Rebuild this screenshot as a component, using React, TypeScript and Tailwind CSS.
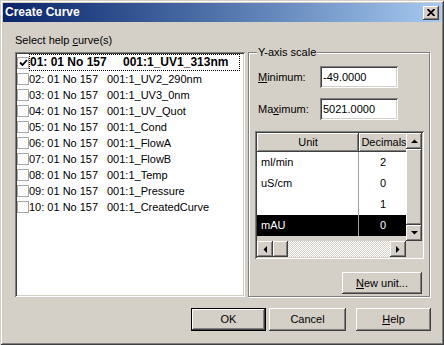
const raised =
  'shadow-[inset_-1px_-1px_0_#404040,inset_1px_1px_0_#ffffff,inset_-2px_-2px_0_#808080,inset_2px_2px_0_#d4d0c8]';
const sunken =
  'shadow-[inset_1px_1px_0_#808080,inset_-1px_-1px_0_#ffffff,inset_2px_2px_0_#404040,inset_-2px_-2px_0_#d4d0c8]';

const curves = [
  ['01: 01 No 157', '001:1_UV1_313nm'],
  ['02: 01 No 157', '001:1_UV2_290nm'],
  ['03: 01 No 157', '001:1_UV3_0nm'],
  ['04: 01 No 157', '001:1_UV_Quot'],
  ['05: 01 No 157', '001:1_Cond'],
  ['06: 01 No 157', '001:1_FlowA'],
  ['07: 01 No 157', '001:1_FlowB'],
  ['08: 01 No 157', '001:1_Temp'],
  ['09: 01 No 157', '001:1_Pressure'],
  ['10: 01 No 157', '001:1_CreatedCurve'],
];

const units = [
  ['ml/min', '2'],
  ['uS/cm', '0'],
  ['', '1'],
  ['mAU', '0'],
];

function Arrow({ dir }: { dir: 'up' | 'down' | 'left' | 'right' }) {
  const pts = {
    up: '0,4 7,4 3.5,0.5',
    down: '0,0 7,0 3.5,3.5',
    left: '4,0 4,7 0.5,3.5',
    right: '0,0 0,7 3.5,3.5',
  }[dir];
  const vert = dir === 'up' || dir === 'down';
  return (
    <div className={`flex h-[16px] w-[16px] shrink-0 items-center justify-center bg-[#d4d0c8] ${raised}`}>
      <svg width={vert ? 7 : 4} height={vert ? 4 : 7} viewBox={vert ? '0 0 7 4' : '0 0 4 7'}>
        <polygon points={pts} fill="#000" />
      </svg>
    </div>
  );
}

function CheckBox({ checked }: { checked?: boolean }) {
  return (
    <div className="flex h-[12px] w-[12px] shrink-0 items-center justify-center border border-[#a8a8a8] bg-white">
      {checked && (
        <svg width="9" height="8" viewBox="0 0 9 8">
          <path d="M1 3.5 L3.5 6 L8 1" stroke="#000" strokeWidth="1.8" fill="none" />
        </svg>
      )}
    </div>
  );
}

export default function App() {
  return (
    <div
      className={`flex h-[345px] w-[444px] flex-col bg-[#d4d0c8] p-[3px] font-['Liberation_Sans',Arial,sans-serif] text-[11px] leading-[13px] text-black shadow-[inset_1px_1px_0_#d4d0c8,inset_-1px_-1px_0_#404040,inset_2px_2px_0_#ffffff,inset_-2px_-2px_0_#808080]`}
    >
      {/* title bar */}
      <div className="flex h-[19px] items-center justify-between bg-gradient-to-r from-[#0a246a] to-[#a6caf0] pl-[2px] pr-[2px]">
        <span className="text-[12px] font-bold text-white">Create Curve</span>
        <div className={`flex h-[14px] w-[16px] items-center justify-center bg-[#d4d0c8] ${raised}`}>
          <svg width="8" height="7" viewBox="0 0 8 7">
            <path d="M0.5 0 L7.5 7 M7.5 0 L0.5 7" stroke="#000" strokeWidth="1.8" />
          </svg>
        </div>
      </div>

      <div className="flex pt-[12px]">
        {/* left column */}
        <div className="ml-[12px] flex flex-col">
          <div className="h-[13px]">
            Select help <span className="underline">c</span>urve(s)
          </div>
          <div className={`mt-[5px] flex h-[245px] w-[230px] flex-col bg-white px-[2px] pt-[2px] ${sunken}`}>
            {curves.map(([a, b], i) =>
              i === 0 ? (
                <div key={i} className="flex h-[17px] items-center">
                  <CheckBox checked />
                  <div className="mr-[3px] flex h-[17px] flex-1 items-center border border-dotted border-black text-[12px] font-bold">
                    <span className="w-[93px] shrink-0">{a}</span>
                    <span>{b}</span>
                  </div>
                </div>
              ) : (
                <div key={i} className="flex h-[16px] items-center">
                  <CheckBox />
                  <span className="w-[78px] shrink-0">{a}</span>
                  <span>{b}</span>
                </div>
              )
            )}
          </div>
        </div>

        {/* right column: Y-axis scale group */}
        <div className="relative ml-[3px] mt-[18px] flex h-[245px] w-[182px] flex-col border border-[#808080] pl-[6px] pt-[13px] shadow-[inset_1px_1px_0_#ffffff,1px_1px_0_#ffffff]">
          <span className="absolute -top-[7px] left-[8px] bg-[#d4d0c8] px-[1px]">Y-axis scale</span>

          <div className="flex h-[22px] items-center">
            <span className="ml-[3px] w-[62px]">
              <span className="underline">M</span>inimum:
            </span>
            <div className={`flex h-[22px] w-[78px] items-center bg-white pl-[3px] ${sunken}`}>-49.0000</div>
          </div>
          <div className="mt-[10px] flex h-[22px] items-center">
            <span className="ml-[3px] w-[62px]">
              Ma<span className="underline">x</span>imum:
            </span>
            <div className={`flex h-[22px] w-[78px] items-center bg-white pl-[3px] ${sunken}`}>5021.0000</div>
          </div>

          {/* units grid */}
          <div className={`mt-[11px] flex h-[128px] w-[169px] flex-col bg-[#d4d0c8] p-[2px] ${sunken}`}>
            <div className="flex h-[108px]">
              <div className="flex w-[149px] flex-col overflow-hidden">
                <div className="flex h-[19px] shrink-0">
                  <div className={`flex w-[102px] shrink-0 items-center justify-center ${raised}`}>Unit</div>
                  <div className={`flex w-[50px] shrink-0 items-center justify-center ${raised}`}>Decimals</div>
                </div>
                {units.map(([u, d], i) => {
                  const sel = i === units.length - 1;
                  return (
                    <div key={i} className={`flex h-[21px] shrink-0 ${sel ? 'bg-black text-white' : 'bg-white'}`}>
                      <div className="flex w-[102px] shrink-0 items-center border-r border-[#a0a0a0] pl-[4px]">{u}</div>
                      <div className="flex w-[48px] shrink-0 items-center justify-center">{d}</div>
                    </div>
                  );
                })}
              </div>
              <div className="flex w-[16px] flex-col">
                <Arrow dir="up" />
                <div className={`flex-1 bg-[#d4d0c8] ${raised}`} />
                <Arrow dir="down" />
              </div>
            </div>
            <div className="flex h-[16px]">
              <Arrow dir="left" />
              <div className={`h-[16px] w-[15px] shrink-0 bg-[#d4d0c8] ${raised}`} />
              <div className="flex-1 bg-[repeating-conic-gradient(#ffffff_0%_25%,#d4d0c8_0%_50%)] bg-size-[2px_2px]" />
              <Arrow dir="right" />
              <div className="w-[16px] shrink-0 bg-[#d4d0c8]" />
            </div>
          </div>

          <div className={`ml-[87px] mt-[13px] flex h-[22px] w-[80px] items-center justify-center ${raised}`}>
            <span>
              <span className="underline">N</span>ew unit...
            </span>
          </div>
        </div>
      </div>

      {/* dialog buttons */}
      <div className="mt-[11px] flex pl-[188px]">
        <div className="h-[23px] w-[75px] border border-black">
          <div className={`flex h-full w-full items-center justify-center ${raised}`}>OK</div>
        </div>
        <div className={`ml-[3px] flex h-[23px] w-[77px] items-center justify-center ${raised}`}>Cancel</div>
        <div className={`ml-[10px] flex h-[23px] w-[75px] items-center justify-center ${raised}`}>
          <span>
            <span className="underline">H</span>elp
          </span>
        </div>
      </div>
    </div>
  );
}
